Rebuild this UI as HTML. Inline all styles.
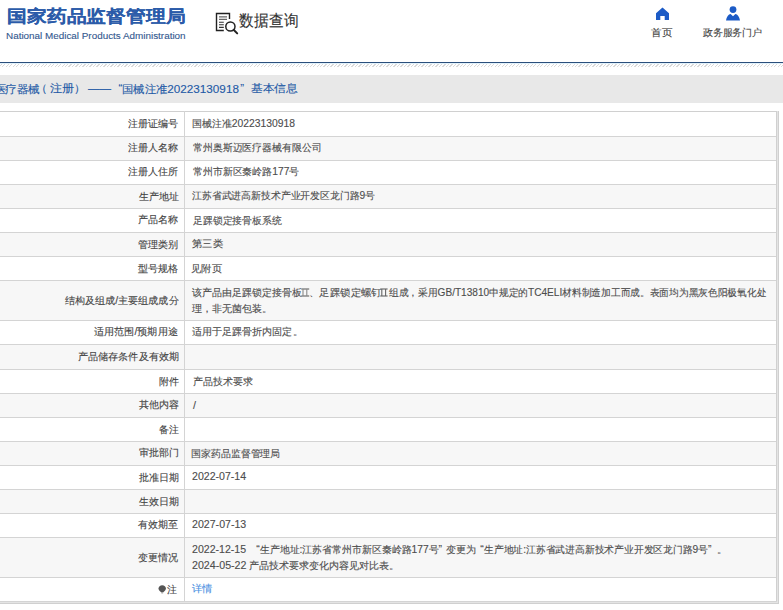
<!DOCTYPE html>
<html><head><meta charset="utf-8">
<style>
html,body{margin:0;padding:0;background:#fff;width:783px;height:610px;overflow:hidden;position:relative;font-family:"Liberation Sans",sans-serif;}
.t{position:absolute;white-space:nowrap;line-height:1.3;transform-origin:0 0;-webkit-text-stroke:0.12px currentColor;}
.abs{position:absolute;}
.bg{position:absolute;left:0;width:777px;}
.hl{position:absolute;left:0;width:777px;height:1px;background:#d4d4d4;}
</style></head><body>
<svg class="abs" style="left:214px;top:11px" width="26" height="26" viewBox="0 0 26 26">
 <path d="M9.8 19.5H2.5V2.5H15.5V8" fill="none" stroke="#222" stroke-width="1.4"/>
 <path d="M5 5.8H13M5 8.3H13" stroke="#666" stroke-width="1.3"/>
 <path d="M5 11.2H9.8M5 13.8H9.8M5 16.4H9.8" stroke="#333" stroke-width="1.1"/>
 <circle cx="16.4" cy="15.5" r="4.6" fill="none" stroke="#222" stroke-width="1.5"/>
 <path d="M19.6 18.8L23.2 22.4" stroke="#222" stroke-width="2" stroke-linecap="round"/>
</svg>
<svg class="abs" style="left:655px;top:6px" width="15" height="15" viewBox="0 0 15 15">
 <path d="M7.5 1.4L14 7.2V13.9H9.7V9.9H5.3V13.9H1V7.2Z" fill="#1c5bc6"/>
</svg>
<svg class="abs" style="left:725px;top:5px" width="16" height="16" viewBox="0 0 16 16">
 <circle cx="8" cy="4.6" r="3.4" fill="#1c5bc6"/>
 <path d="M1 15.4C1.5 11.5 3.5 9.2 5.6 8.9L8 11.2L10.4 8.9C12.5 9.2 14.5 11.5 15 15.4Z" fill="#1c5bc6"/>
</svg>
<div class="abs" style="left:0;top:62px;width:783px;height:1px;background:#2a4e7b"></div>
<div class="abs" style="left:0;top:63px;width:783px;height:1px;background:#e2f2fb"></div>
<div class="abs" style="left:0;top:64px;width:783px;height:3px;background:repeating-linear-gradient(135deg,#fff 0 0.8px,#dadada 0.8px 1.7px,#fff 1.7px 2.47px)"></div>
<div class="abs" style="left:0;top:75px;width:783px;height:27.5px;background:#e8e8e8"></div>
<div class="bg" style="top:112px;height:24px;background:#ffffff"></div>
<div class="hl" style="top:136px"></div>
<div class="bg" style="top:137px;height:23px;background:#f7f7f7"></div>
<div class="hl" style="top:160px"></div>
<div class="bg" style="top:161px;height:23px;background:#ffffff"></div>
<div class="hl" style="top:184px"></div>
<div class="bg" style="top:185px;height:23px;background:#f7f7f7"></div>
<div class="hl" style="top:208px"></div>
<div class="bg" style="top:209px;height:23px;background:#ffffff"></div>
<div class="hl" style="top:232px"></div>
<div class="bg" style="top:233px;height:23px;background:#f7f7f7"></div>
<div class="hl" style="top:256px"></div>
<div class="bg" style="top:257px;height:23px;background:#ffffff"></div>
<div class="hl" style="top:280px"></div>
<div class="bg" style="top:281px;height:39px;background:#f7f7f7"></div>
<div class="hl" style="top:320px"></div>
<div class="bg" style="top:321px;height:23px;background:#ffffff"></div>
<div class="hl" style="top:344px"></div>
<div class="bg" style="top:345px;height:24px;background:#f7f7f7"></div>
<div class="hl" style="top:369px"></div>
<div class="bg" style="top:370px;height:23px;background:#ffffff"></div>
<div class="hl" style="top:393px"></div>
<div class="bg" style="top:394px;height:23px;background:#f7f7f7"></div>
<div class="hl" style="top:417px"></div>
<div class="bg" style="top:418px;height:23px;background:#ffffff"></div>
<div class="hl" style="top:441px"></div>
<div class="bg" style="top:442px;height:23px;background:#f7f7f7"></div>
<div class="hl" style="top:465px"></div>
<div class="bg" style="top:466px;height:23px;background:#ffffff"></div>
<div class="hl" style="top:489px"></div>
<div class="bg" style="top:490px;height:23px;background:#f7f7f7"></div>
<div class="hl" style="top:513px"></div>
<div class="bg" style="top:514px;height:23px;background:#ffffff"></div>
<div class="hl" style="top:537px"></div>
<div class="bg" style="top:538px;height:39px;background:#f7f7f7"></div>
<div class="hl" style="top:577px"></div>
<div class="bg" style="top:578px;height:23px;background:#ffffff"></div>
<div class="hl" style="top:601px"></div>
<div class="abs" style="left:0;top:111px;width:779px;height:1px;background:#d0d0d0"></div>
<div class="abs" style="left:184px;top:111px;width:1px;height:490px;background:#d4d4d4"></div>
<div class="abs" style="left:776px;top:111px;width:1px;height:490px;background:#d0d0d0"></div>
<div class="abs" style="left:777px;top:111px;width:1px;height:calc(490px + 2px);background:#e4e4e4"></div>
<div class="abs" style="left:778px;top:111px;width:1px;height:calc(490px + 3px);background:#d0d0d0"></div>
<div class="abs" style="left:0;top:calc(601px + 2px);width:779px;height:1px;background:#d0d0d0"></div>
<div class="abs" style="left:0;top:calc(601px + 1px);width:777px;height:1px;background:#e4e4e4"></div>
<svg class="abs" style="left:157px;top:583px" width="10" height="12" viewBox="0 0 10 12">
 <path d="M5.2 2.2C7.3 2.2 8.9 3.7 8.9 5.6C8.9 7.2 7.6 8.3 6.6 9H3.8C2.8 8.3 1.5 7.2 1.5 5.6C1.5 3.7 3.1 2.2 5.2 2.2Z" fill="#555"/>
 <path d="M3.9 9.1H6.5L6 10.6H4.4Z" fill="#aaa"/>
</svg>
<svg class="abs" style="left:301px;top:287.5px" width="8.5" height="9" viewBox="0 0 8.5 9"><path d="M0.2 1H8.2M0.2 8H8.2" stroke="#555" stroke-width="1.1"/><path d="M2 1V8M5.8 1V8" stroke="#8a8a8a" stroke-width="1.1"/></svg>
<svg class="abs" style="left:379.6px;top:287.5px" width="8.5" height="9" viewBox="0 0 8.5 9"><path d="M0.2 1H7.6M0.2 8H7.6" stroke="#555" stroke-width="1.1"/><path d="M1.8 1V8M5.6 1V8" stroke="#666" stroke-width="1.1"/></svg>
<div class="t" id="logo" style="left:6.770px;top:4.587px;font-size:20px;color:#2b5ba9;font-weight:bold;transform:scale(0.9925,0.8543);">国家药品监督管理局</div>
<div class="t" id="en" style="left:5.666px;top:30.603px;font-size:9.8px;color:#34598f;transform:scale(1.0085,0.9333);">National Medical Products Administration</div>
<div class="t" id="dq" style="left:238.679px;top:10.327px;font-size:15px;color:#333;transform:scale(0.9990,1.0866);">数据查询</div>
<div class="t" id="sy" style="left:650.981px;top:25.992px;font-size:10px;color:#444;transform:scale(1.0558,0.9996);">首页</div>
<div class="t" id="zw" style="left:703.156px;top:25.946px;font-size:10px;color:#444;transform:scale(0.9797,0.9760);">政务服务门户</div>
<div class="t" id="b_a0" style="left:-5.085px;top:81.792px;font-size:11.4px;color:#1f5aa6;transform:scale(1.0206,1.0000);">医</div>
<div class="t" id="b_a" style="left:5.014px;top:81.792px;font-size:11.4px;color:#1f5aa6;transform:scale(1.0502,1.0000);">疗器械</div>
<div class="t" id="b_b" style="left:36.228px;top:81.497px;font-size:11.4px;color:#1f5aa6;transform:scale(1.0200,1.0000);">（</div>
<div class="t" id="b_c" style="left:49.640px;top:81.497px;font-size:11.4px;color:#1f5aa6;transform:scale(1.1036,1.0000);">注册</div>
<div class="t" id="b_d" style="left:73.948px;top:81.497px;font-size:11.4px;color:#1f5aa6;transform:scale(1.0200,1.0000);">）</div>
<div class="t" id="b_e" style="left:88.330px;top:81.497px;font-size:11.4px;color:#1f5aa6;transform:scale(1.0119,1.0000);">——</div>
<div class="t" id="b_f" style="left:118.581px;top:81.497px;font-size:11.4px;color:#1f5aa6;transform:scale(1.0000,1.0000);">“</div>
<div class="t" id="b_g" style="left:122.119px;top:82.401px;font-size:11.4px;color:#1f5aa6;transform:scale(1.0284,1.0000);">国械注准20223130918</div>
<div class="t" id="b_h" style="left:240.237px;top:81.497px;font-size:11.4px;color:#1f5aa6;transform:scale(1.0000,1.0000);">”</div>
<div class="t" id="b_i" style="left:250.991px;top:81.175px;font-size:11.4px;color:#1f5aa6;transform:scale(1.0642,1.0000);">基本信息</div>
<div class="t" id="L0" style="left:127.985px;top:117.009px;font-size:10.4px;color:#444;transform:scale(1.0010,1.0000);">注册证编号</div>
<div class="t" id="L1" style="left:128.345px;top:141.343px;font-size:10.4px;color:#444;transform:scale(1.0010,1.0000);">注册人名称</div>
<div class="t" id="L2" style="left:128.393px;top:165.357px;font-size:10.4px;color:#444;transform:scale(1.0010,1.0000);">注册人住所</div>
<div class="t" id="L3" style="left:138.620px;top:189.962px;font-size:10.4px;color:#444;transform:scale(1.0010,1.0000);">生产地址</div>
<div class="t" id="L4" style="left:137.620px;top:213.287px;font-size:10.4px;color:#444;transform:scale(1.0010,1.0000);">产品名称</div>
<div class="t" id="L5" style="left:137.728px;top:237.756px;font-size:10.4px;color:#444;transform:scale(1.0010,1.0000);">管理类别</div>
<div class="t" id="L6" style="left:137.879px;top:261.652px;font-size:10.4px;color:#444;transform:scale(1.0010,1.0000);">型号规格</div>
<div class="t" id="L7" style="left:64.631px;top:293.698px;font-size:10.4px;color:#444;transform:scale(1.0066,1.0000);">结构及组成/主要组成成分</div>
<div class="t" id="L8" style="left:94.390px;top:324.794px;font-size:10.4px;color:#444;transform:scale(1.0101,1.0000);">适用范围/预期用途</div>
<div class="t" id="L9" style="left:78.104px;top:349.999px;font-size:10.4px;color:#444;transform:scale(1.0088,1.0000);">产品储存条件及有效期</div>
<div class="t" id="L10" style="left:158.788px;top:374.861px;font-size:10.4px;color:#444;transform:scale(1.0010,1.0000);">附件</div>
<div class="t" id="L11" style="left:139.035px;top:397.994px;font-size:10.4px;color:#444;transform:scale(1.0010,1.0000);">其他内容</div>
<div class="t" id="L12" style="left:158.858px;top:422.653px;font-size:10.4px;color:#444;transform:scale(1.0010,1.0000);">备注</div>
<div class="t" id="L13" style="left:138.929px;top:446.261px;font-size:10.4px;color:#444;transform:scale(1.0010,1.0000);">审批部门</div>
<div class="t" id="L14" style="left:139.185px;top:470.779px;font-size:10.4px;color:#444;transform:scale(1.0010,1.0000);">批准日期</div>
<div class="t" id="L15" style="left:138.992px;top:494.696px;font-size:10.4px;color:#444;transform:scale(1.0010,1.0000);">生效日期</div>
<div class="t" id="L16" style="left:137.531px;top:518.435px;font-size:10.4px;color:#444;transform:scale(1.0010,1.0000);">有效期至</div>
<div class="t" id="L17" style="left:137.887px;top:551.310px;font-size:10.4px;color:#444;transform:scale(1.0010,1.0000);">变更情况</div>
<div class="t" id="L18" style="left:167.303px;top:582.626px;font-size:10.4px;color:#444;transform:scale(1.0010,1.0000);">注</div>
<div class="t" id="V0" style="left:191.646px;top:117.345px;font-size:10.4px;color:#4d4d4d;transform:scale(0.9957,1.0000);">国械注准20223130918</div>
<div class="t" id="V1" style="left:192.748px;top:140.772px;font-size:10.4px;color:#4d4d4d;transform:scale(0.9889,1.0000);">常州奥斯迈医疗器械有限公司</div>
<div class="t" id="V2" style="left:192.808px;top:165.176px;font-size:10.4px;color:#4d4d4d;transform:scale(0.9899,1.0000);">常州市新区秦岭路177号</div>
<div class="t" id="V3" style="left:192.195px;top:189.094px;font-size:10.4px;color:#4d4d4d;transform:scale(0.9859,1.0000);">江苏省武进高新技术产业开发区龙门路9号</div>
<div class="t" id="V4" style="left:192.733px;top:213.897px;font-size:10.4px;color:#4d4d4d;transform:scale(0.9842,1.0000);">足踝锁定接骨板系统</div>
<div class="t" id="V5" style="left:192.452px;top:237.450px;font-size:10.4px;color:#4d4d4d;transform:scale(1.0348,1.0000);">第三类</div>
<div class="t" id="V6" style="left:191.475px;top:261.619px;font-size:10.4px;color:#4d4d4d;transform:scale(1.0266,1.0000);">见附页</div>
<div class="t" id="V8" style="left:191.754px;top:325.009px;font-size:10.4px;color:#4d4d4d;transform:scale(1.0053,1.0000);">适用于足踝骨折内固定。</div>
<div class="t" id="V10" style="left:192.561px;top:374.958px;font-size:10.4px;color:#4d4d4d;transform:scale(0.9987,1.0000);">产品技术要求</div>
<div class="t" id="V11" style="left:193.076px;top:398.948px;font-size:10.4px;color:#4d4d4d;transform:scale(1.0311,1.0000);">/</div>
<div class="t" id="V13" style="left:191.116px;top:446.702px;font-size:10.4px;color:#4d4d4d;transform:scale(0.9923,1.0000);">国家药品监督管理局</div>
<div class="t" id="V14" style="left:192.334px;top:469.644px;font-size:10.4px;color:#4d4d4d;transform:scale(1.0184,1.0000);">2022-07-14</div>
<div class="t" id="V16" style="left:192.345px;top:518.352px;font-size:10.4px;color:#4d4d4d;transform:scale(1.0209,1.0000);">2027-07-13</div>
<div class="t" id="r8a" style="left:192.482px;top:285.614px;font-size:10.4px;color:#4d4d4d;transform:scale(0.9964,1.0000);">该产品由足踝锁定接骨板</div>
<div class="t" id="r8c" style="left:308.673px;top:285.614px;font-size:10.4px;color:#4d4d4d;transform:scale(1.0377,1.0000);">、足踝锁定螺钉</div>
<div class="t" id="r8e" style="left:389.243px;top:285.614px;font-size:10.4px;color:#4d4d4d;transform:scale(0.9713,1.0000);">组成，采用GB/T13810中规定的TC4ELI材料制造加工而成。表面均为黑灰色阳极氧化处</div>
<div class="t" id="r8f" style="left:191.552px;top:302.194px;font-size:10.4px;color:#4d4d4d;transform:scale(1.0043,1.0000);">理，非无菌包装。</div>
<div class="t" id="r18a" style="left:192.401px;top:542.869px;font-size:10.4px;color:#4d4d4d;transform:scale(1.0183,1.0000);">2022-12-15</div>
<div class="t" id="r18b" style="left:256.196px;top:542.869px;font-size:10.4px;color:#4d4d4d;transform:scale(1.0000,1.0000);">“</div>
<div class="t" id="r18c" style="left:259.698px;top:542.869px;font-size:10.4px;color:#4d4d4d;transform:scale(0.9906,1.0000);">生产地址:江苏省常州市新区秦岭路177号</div>
<div class="t" id="r18d" style="left:438.458px;top:542.869px;font-size:10.4px;color:#4d4d4d;transform:scale(1.0000,1.0000);">”</div>
<div class="t" id="r18e" style="left:445.880px;top:542.869px;font-size:10.4px;color:#4d4d4d;transform:scale(1.0157,1.0000);">变更为</div>
<div class="t" id="r18f" style="left:480.348px;top:542.869px;font-size:10.4px;color:#4d4d4d;transform:scale(1.0000,1.0000);">“</div>
<div class="t" id="r18g" style="left:484.293px;top:542.869px;font-size:10.4px;color:#4d4d4d;transform:scale(0.9799,1.0000);">生产地址:江苏省武进高新技术产业开发区龙门路9号</div>
<div class="t" id="r18h" style="left:708.102px;top:542.869px;font-size:10.4px;color:#4d4d4d;transform:scale(1.0000,1.0000);">”</div>
<div class="t" id="r18i" style="left:717.000px;top:542.869px;font-size:10.4px;color:#4d4d4d;transform:scale(1.0000,1.0000);">。</div>
<div class="t" id="r18j" style="left:192.326px;top:559.189px;font-size:10.4px;color:#4d4d4d;transform:scale(1.0246,1.0000);">2024-05-22</div>
<div class="t" id="r18k" style="left:248.861px;top:559.189px;font-size:10.4px;color:#4d4d4d;transform:scale(1.0016,1.0000);">产品技术要求变化内容见对比表。</div>
<div class="t" id="V18" style="left:191.936px;top:582.464px;font-size:10.4px;color:#4a90e2;transform:scale(1.0191,1.0000);">详情</div>
</body></html>
